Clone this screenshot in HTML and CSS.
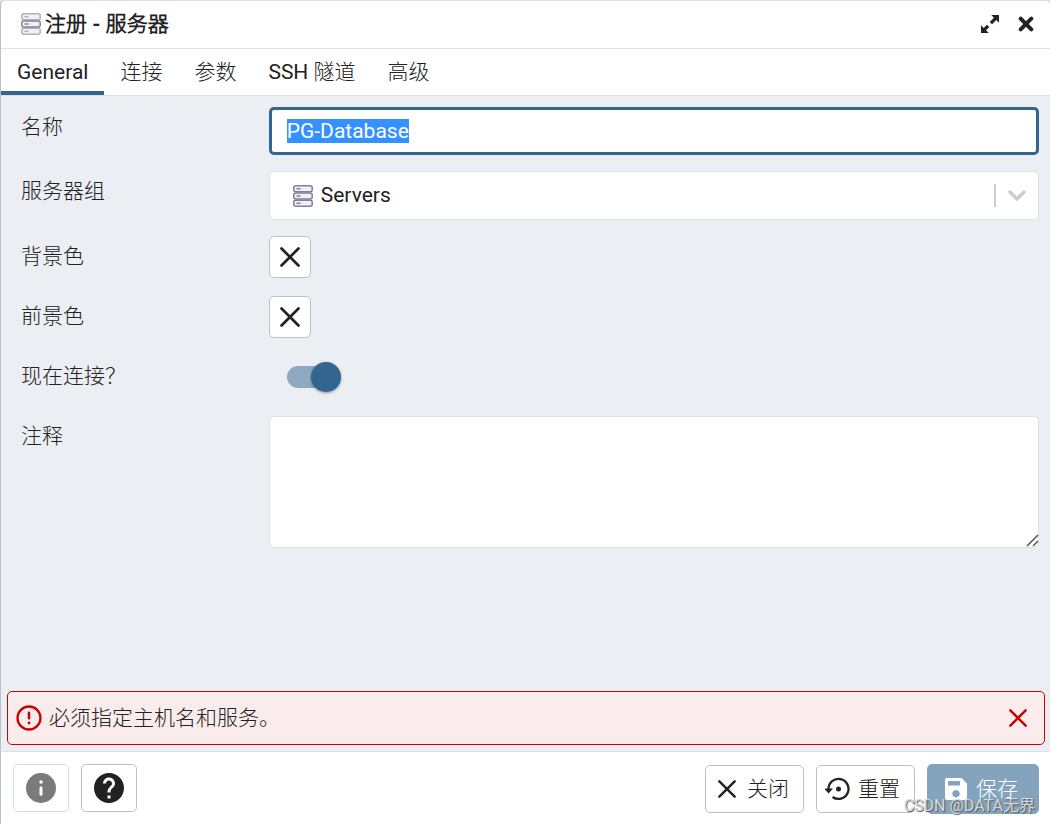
FILE: index.html
```html
<!DOCTYPE html>
<html lang="zh-CN">
<head>
<meta charset="utf-8">
<title>注册 - 服务器</title>
<link rel="stylesheet" href="styles.css">
</head>
<body>
<svg class="sprite" aria-hidden="true">
  <symbol id="server" viewBox="0 0 20 22">
    <g fill="#f2f1f2" stroke="currentColor" stroke-width="1.5">
      <rect x="0.8" y="0.8" width="18.4" height="6" rx="2"/>
      <rect x="0.8" y="15.2" width="18.4" height="6" rx="2"/>
      <rect class="server-mid" x="0.8" y="8" width="18.4" height="6" rx="2"/>
      <path class="server-mid" d="M3.5 11h4"/><path d="M3.5 3.8h4M3.5 18.2h4"/>
    </g>
  </symbol>
  <symbol id="cross" viewBox="0 0 20 20">
    <path d="M1.5 1.5l17 17M18.5 1.5l-17 17" fill="none" stroke="currentColor" stroke-width="2.7" stroke-linecap="round"/>
  </symbol>
</svg>
<main class="dialog">
  <header class="titlebar">
    <svg class="icon-server faded"><use href="#server"/></svg>
    <h1 class="title">注册 - 服务器</h1>
    <button class="plain" type="button" aria-label="最大化">
      <svg width="20" height="20" viewBox="0 0 20 20"><path d="M11.2 1H19v7.8l-2.7-2.7-4.2 4.2-2.4-2.4 4.2-4.2zM8.800 19H1v-7.800l2.700 2.700 3.200-3.200 2.400 2.400-3.200 3.200z" fill="currentColor"/></svg>
    </button>
    <button class="plain" type="button" aria-label="关闭窗口">
      <svg width="16" height="16" viewBox="0 0 16 16"><path d="M2.700 2.700l10.600 10.600M13.300 2.700L2.700 13.300" stroke="currentColor" stroke-width="4" stroke-linecap="round"/></svg>
    </button>
  </header>
  <nav class="tabs" role="tablist">
    <button class="tab active" type="button" role="tab" aria-selected="true">General</button>
    <button class="tab" type="button" role="tab">连接</button>
    <button class="tab" type="button" role="tab">参数</button>
    <button class="tab" type="button" role="tab">SSH 隧道</button>
    <button class="tab" type="button" role="tab">高级</button>
  </nav>
  <form class="form">
    <div class="row">
      <label class="label" for="name">名称</label>
      <input class="field name" id="name" type="text" value="PG-Database" autofocus>
    </div>
    <div class="row">
      <label class="label" for="group">服务器组</label>
      <div class="field select-box">
        <svg class="icon-server"><use href="#server"/></svg>
        <select class="select" id="group"><option>Servers</option></select>
        <span class="divider"></span>
        <svg class="chevron" width="18" height="11" viewBox="0 0 18 11"><path d="M2 2l7 7 7-7" fill="none" stroke="currentColor" stroke-width="3.400" stroke-linecap="round"/></svg>
      </div>
    </div>
    <div class="row">
      <label class="label" for="bg">背景色</label>
      <button class="swatch" id="bg" type="button" aria-label="背景色"><svg width="20" height="20"><use href="#cross"/></svg></button>
    </div>
    <div class="row">
      <label class="label" for="fg">前景色</label>
      <button class="swatch" id="fg" type="button" aria-label="前景色"><svg width="20" height="20"><use href="#cross"/></svg></button>
    </div>
    <div class="row">
      <label class="label" for="connect">现在连接？</label>
      <input class="switch" id="connect" type="checkbox" role="switch" checked>
    </div>
    <div class="row">
      <label class="label" for="notes">注释</label>
      <div class="notes-box">
        <textarea class="field notes" id="notes"></textarea>
        <svg class="grip" width="13" height="13" viewBox="0 0 13 13"><path d="M1 12L12 1M7 12l5-5" stroke="#555" stroke-width="1.500"/></svg>
      </div>
    </div>
  </form>
  <div class="alert" role="alert">
    <svg width="26" height="26" viewBox="0 0 26 26"><circle cx="13" cy="13" r="11.500" fill="none" stroke="currentColor" stroke-width="2.300"/><path d="M13 7.800v5.500" stroke="currentColor" stroke-width="2.500" stroke-linecap="round"/><circle cx="13" cy="18" r="1.400" fill="currentColor"/></svg>
    <span class="message">必须指定主机名和服务。</span>
    <button class="plain dismiss" type="button" aria-label="关闭消息"><svg width="18" height="18"><use href="#cross"/></svg></button>
  </div>
  <footer class="footer">
    <button class="btn square" type="button" disabled aria-label="信息">
      <svg width="30" height="30" viewBox="0 0 30 30"><circle cx="15" cy="15" r="15" fill="#7a7a7a"/><path d="M15 14.800v6.400" stroke="#fff" stroke-width="3" stroke-linecap="round"/><circle cx="15" cy="9" r="1.800" fill="#fff"/></svg>
    </button>
    <button class="btn square" type="button" aria-label="帮助">
      <svg width="30" height="30" viewBox="2 2 20 20"><path fill="#222" d="M12 2C6.480 2 2 6.480 2 12s4.480 10 10 10 10-4.480 10-10S17.520 2 12 2zm1 17h-2v-2h2v2zm2.070-7.750l-.900.920C13.450 12.900 13 13.500 13 15h-2v-.500c0-1.100.450-2.100 1.170-2.830l1.240-1.260c.370-.360.590-.860.590-1.410 0-1.100-.900-2-2-2s-2 .900-2 2H8c0-2.210 1.790-4 4-4s4 1.790 4 4c0 .880-.360 1.680-.930 2.250z"/></svg>
    </button>
    <span class="spacer"></span>
    <button class="btn" type="button"><span class="btn-icon"><svg width="18" height="18"><use href="#cross"/></svg></span>关闭</button>
    <button class="btn" type="button"><span class="btn-icon"><svg width="26" height="24" viewBox="1 0 26 24"><path d="M4.500 12A10 10 0 1 1 8.600 20" fill="none" stroke="currentColor" stroke-width="2.300"/><path d="M0 11.500h9l-4.500 5z" fill="currentColor"/><circle cx="14.500" cy="12" r="2.500" fill="currentColor"/></svg></span>重置</button>
    <span class="save-wrap">
      <button class="btn save" type="button" disabled><span class="btn-icon"><svg width="24" height="24" viewBox="0 0 24 24"><path fill="#fff" fill-rule="evenodd" d="M3 1h14.500L23 6.500V21a2 2 0 0 1-2 2H3a2 2 0 0 1-2-2V3a2 2 0 0 1 2-2zM4 4v4.500h12V4zM12 13a3.700 3.700 0 1 0 .01 0z"/></svg></span>保存</button>
      <span class="watermark">CSDN @DATA无界</span>
    </span>
  </footer>
</main>
<script src="main.js"></script>
</body>
</html>
```
FILE: styles.css
```css
* { box-sizing: border-box; }
body {
  margin: 0;
  background: #dde0e6;
  color: #222;
  font: 300 21px/28px Roboto, "Noto Sans CJK SC Light", "Noto Sans CJK SC", sans-serif;
}
button, input, select, textarea { font: inherit; color: inherit; margin: 0; }
button { cursor: pointer; }
svg { display: block; flex: none; }
.sprite { position: absolute; width: 0; height: 0; }
.dialog {
  display: flex;
  flex-direction: column;
  min-height: 100vh;
  border-left: 1px solid #bac1cd;
  border-top: 1px solid #dde0e6;
  border-radius: 5px 5px 0 0;
  background: #ebeef3;
}
.titlebar {
  display: flex;
  align-items: center;
  height: 48px;
  padding: 0 16px 1px 20px;
  border-bottom: 1px solid #dde0e6;
  border-radius: 5px 5px 0 0;
  background: #fff;
}
.title { flex: 1; margin: 0 0 0 4px; font-size: 21px; font-weight: 700; }
.icon-server { width: 20px; height: 22px; color: #827e9c; }
.faded { color: #b2b2b2; }
.server-mid { stroke: #827e9c; }
.plain { display: flex; padding: 0; border: 0; background: none; }
.titlebar .plain + .plain { margin-left: 18px; }
.tabs {
  display: flex;
  height: 47px;
  border-bottom: 1px solid #dde0e6;
  background: #fff;
}
.tab {
  padding: 4px 16px 0;
  border: 0;
  border-bottom: 4px solid transparent;
  background: none;
  font-weight: 400;
}
.tab.active { border-bottom-color: #326690; }
.form {
  display: grid;
  align-content: start;
  gap: 16px;
  flex: 1;
  padding: 11px 11px 16px;
}
.row {
  display: grid;
  grid-template-columns: 1fr 3fr;
  align-items: start;
  min-height: 44px;
}
.label { padding-left: 9px; line-height: 40px; }
.field {
  width: 100%;
  border: 1px solid #dde0e6;
  border-radius: 5px;
  background: #fff;
  font-weight: 400;
}
.name { height: 48px; padding: 0 15px; border: 3px solid #326690; outline: 0; }
.name::selection { background: rgba(51, 144, 255, 0.99); color: #fff; }
.select-box { display: flex; align-items: center; height: 49px; padding: 0 12px 0 23px; }
.select { flex: 1; appearance: none; padding: 0 8px 2px; border: 0; background: none; outline: 0; }
.divider { width: 2px; height: 23px; background: #ccc; }
.chevron { margin-left: 12px; color: #ccc; }
.swatch {
  display: grid;
  place-items: center;
  width: 42px;
  height: 42px;
  padding: 0;
  border: 1px solid #bac1cd;
  border-radius: 5px;
  background: #fff;
}
.switch {
  appearance: none;
  display: flex;
  align-items: center;
  justify-content: flex-end;
  width: 54px;
  height: 22px;
  margin: 10px 18px;
  border-radius: 11px;
  background: linear-gradient(to right, #8fa8c1 40px, transparent 40px);
}
.switch::before {
  content: "";
  width: 30px;
  height: 30px;
  flex: none;
  border-radius: 50%;
  background: #326690;
  box-shadow: 0 1px 3px rgba(0, 0, 0, 0.4);
}
.notes-box { position: relative; display: flex; }
.notes { height: 132px; padding: 10px 15px; resize: vertical; outline: 0; }
.notes::-webkit-resizer { display: none; }
.grip { position: absolute; right: 0; bottom: 1px; pointer-events: none; }
.alert {
  display: flex;
  align-items: center;
  height: 54px;
  margin: 0 5px 6px 6px;
  padding: 0 17px 0 8px;
  border: 1px solid #c00;
  border-radius: 5px;
  background: #faecec;
  color: #c00;
}
.message { flex: 1; margin-left: 7px; color: #222; }
.footer {
  display: flex;
  align-items: center;
  gap: 12px;
  height: 73px;
  padding: 2px 11px 0 12px;
  border-top: 1px solid #dde0e6;
  background: #fff;
}
.btn {
  display: flex;
  align-items: center;
  justify-content: center;
  height: 48px;
  padding: 0 14px 0 6px;
  border: 1px solid #bac1cd;
  border-radius: 5px;
  background: #fff;
  color: #222;
}
.btn-icon { display: grid; place-items: center; width: 30px; margin-right: 5px; }
.square { width: 56px; margin-bottom: 2px; padding: 0; }
.square:disabled { border-color: #d8dce3; }
.spacer { flex: 1; }
.save-wrap { position: relative; display: flex; }
.save { height: 50px; padding: 0 20px 0 13px; border-color: #84a3bc; background: #84a3bc; color: #fff; }
.watermark {
  position: absolute;
  right: 4px;
  bottom: -2px;
  font: 400 16px/20px Roboto, "Noto Sans CJK SC", sans-serif;
  white-space: nowrap;
  color: #d5d8dc;
  text-shadow: 1px 1px 1px #555;
}
```
FILE: main.js
```js
const nameField = document.getElementById("name");
nameField.focus();
nameField.select();
```
